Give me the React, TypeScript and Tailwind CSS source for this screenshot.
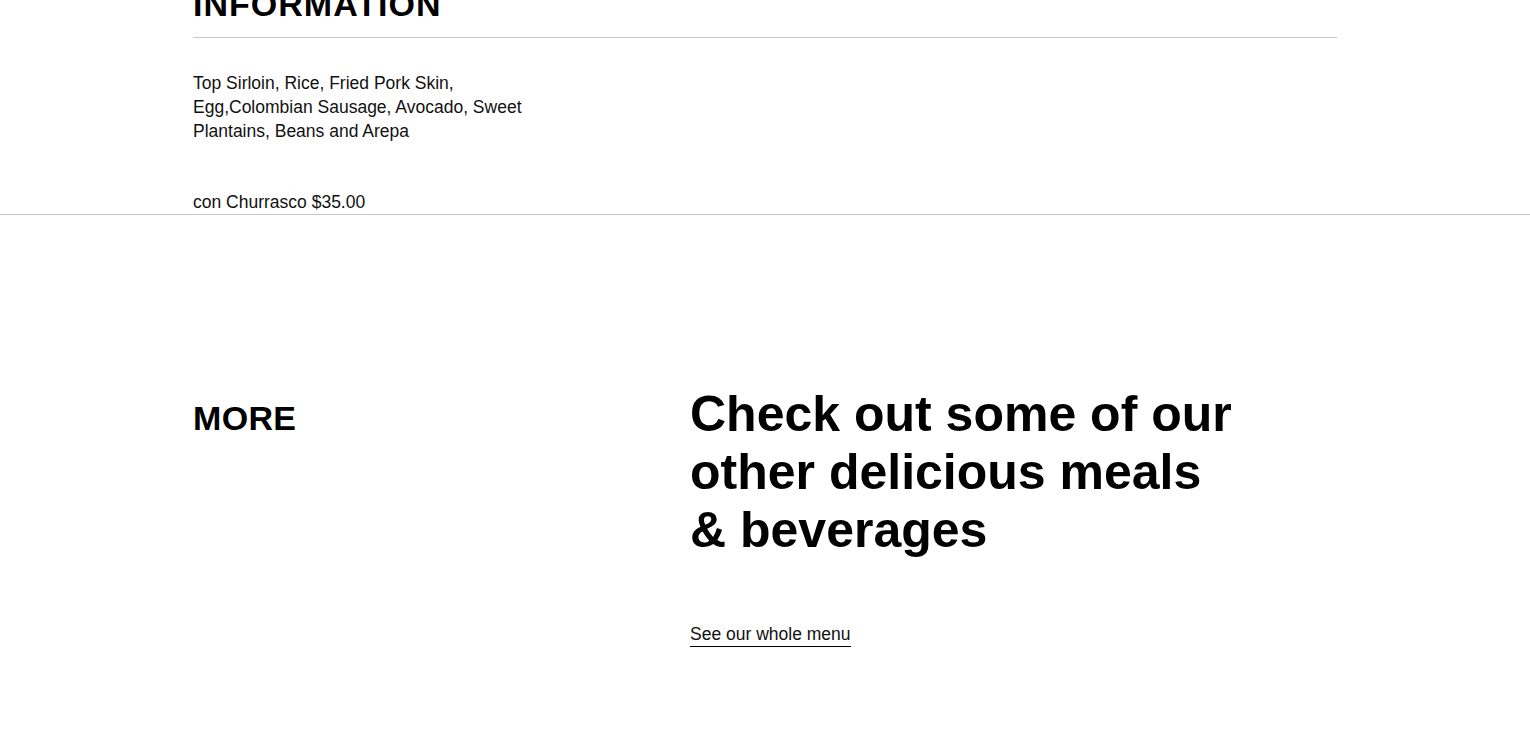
export default function App() {
  return (
    <div className="min-h-[740px] bg-white text-black" style={{ fontFamily: '"Liberation Sans", Arial, sans-serif' }}>
      <section className="mx-auto w-[1144px]">
        <h2 className="-mt-[16px] border-b border-[#c6c6c6] pb-[13px] text-[34px] font-bold uppercase leading-[40px] tracking-[0.03em]">
          Information
        </h2>
        <p className="mt-[33px] text-[17.5px] leading-[24px] text-[#111]">
          Top Sirloin, Rice, Fried Pork Skin,
          <br />
          Egg,Colombian Sausage, Avocado, Sweet
          <br />
          Plantains, Beans and Arepa
        </p>
        <p className="mt-[48px] text-[17.5px] leading-[23px] text-[#111]">con Churrasco $35.00</p>
      </section>
      <div className="border-t border-[#c6c6c6]" />
      <section className="mx-auto grid w-[1144px] grid-cols-[497px_1fr] pt-[170px] pb-[90px]">
        <h3 className="mt-[13px] text-[34px] font-bold uppercase leading-[40px] tracking-[0.01em]">More</h3>
        <div>
          <h2 className="w-[552px] text-[50px] font-bold leading-[58px]">
            Check out some of our other delicious meals &amp; beverages
          </h2>
          <a
            href="#"
            className="mt-[64px] inline-block border-b border-black text-[17.5px] leading-[23px] text-[#111]"
          >
            See our whole menu
          </a>
        </div>
      </section>
    </div>
  );
}
